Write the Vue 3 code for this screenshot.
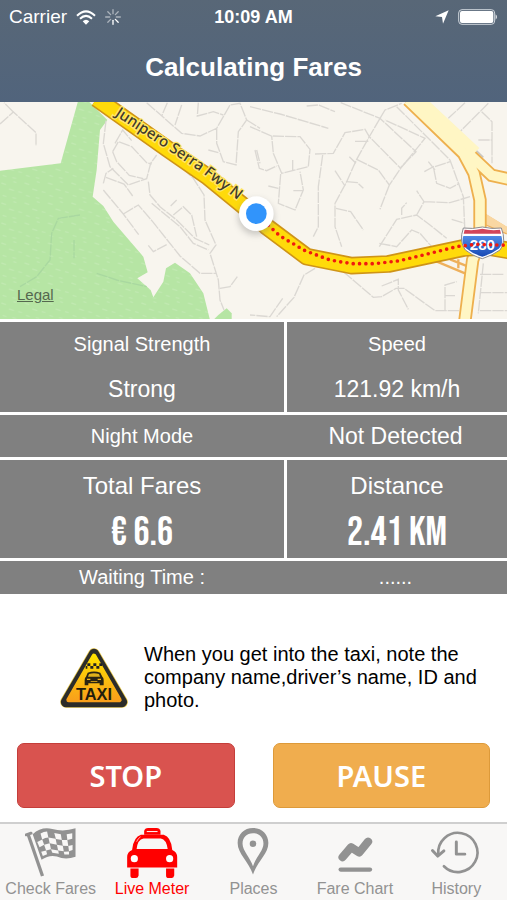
<script setup>
import { ref } from 'vue';

const activeTab = ref('meter');

const tabs = [
  { id: 'fares', label: 'Check Fares' },
  { id: 'meter', label: 'Live Meter' },
  { id: 'places', label: 'Places' },
  { id: 'chart', label: 'Fare Chart' },
  { id: 'history', label: 'History' },
];

const spokes = [0, 45, 90, 135, 180, 225, 270, 315];
</script>

<template>
  <div class="screen">
    <header class="header">
      <div class="status">
        <div class="status-side">
          <span>Carrier</span>
          <svg class="wifi" viewBox="0 0 60 45">
            <g fill="none" stroke="#fff" stroke-width="6">
              <path d="M3 17 Q30 -9 57 17" />
              <path d="M12 26 Q30 9 48 26" />
            </g>
            <path d="M20 34 Q30 25 40 34 L30 44 Z" fill="#fff" />
          </svg>
          <svg class="spinner" viewBox="-24 -24 48 48">
            <line
              v-for="(deg, i) in spokes"
              :key="deg"
              x1="0" y1="-10" x2="0" y2="-22"
              stroke="#fff" stroke-width="4" stroke-linecap="round"
              :opacity="i > 2 && i < 5 ? 1 : 0.5"
              :transform="`rotate(${deg})`"
            />
          </svg>
        </div>
        <span class="clock">10:09 AM</span>
        <div class="status-side right">
          <svg class="arrow" viewBox="0 0 42 42">
            <path d="M41 1 L24 41 L21 21 L1 19 Z" fill="#fff" />
          </svg>
          <svg class="battery" viewBox="0 0 120 48">
            <rect x="2" y="2" width="108" height="44" rx="10" fill="none" stroke="#cdd3da" stroke-width="3" />
            <rect x="6" y="6" width="100" height="36" rx="6" fill="#fff" />
            <path d="M113 16 Q120 24 113 32 Z" fill="#fff" />
          </svg>
        </div>
      </div>
      <h1 class="title">Calculating Fares</h1>
    </header>

    <div class="map">
      <svg class="map-canvas" viewBox="0 0 1521 651" preserveAspectRatio="xMidYMid slice">
        <defs>
          <pattern id="grass" width="70" height="60" patternUnits="userSpaceOnUse">
            <rect width="70" height="60" fill="#b6e5a4" />
            <path d="M4 9l14 5M40 5l9 3M27 27l15 5M55 35l11 3M8 46l11 4M37 53l11 2" stroke="#c0e9b0" stroke-width="4" />
          </pattern>
          <linearGradient id="shieldBlue" x1="0" y1="0" x2="0" y2="1">
            <stop offset="0" stop-color="#4f8be6" />
            <stop offset="1" stop-color="#1748b4" />
          </linearGradient>
          <filter id="soft" x="-50%" y="-50%" width="200%" height="200%">
            <feGaussianBlur stdDeviation="9" />
          </filter>
        </defs>
        <rect width="1521" height="651" fill="#f8f5ee" />

        <!-- west side -->
        <g transform="translate(0 -6)">
          <path
            d="M235 0 L182 190 L0 212 V660 H630 L610 580 L570 520 L525 488 L498 505 L490 545 L460 592 L452 570 L412 535 L443 517 L430 470 L340 365 L310 318 L278 290 L290 210 L300 90 L322 60 L262 0 Z"
            fill="url(#grass)"
          />
          <path d="M655 645 L680 625 L695 640 V660 H640 Z" fill="#b6e5a4" />
          <g class="lane">
            <path d="M0 72 L40 36 L108 98 V138 M40 36 L12 8" />
            <path d="M318 62 L310 130 L330 200 L385 255 L440 236 L452 190 L470 165" />
            <path d="M345 130 L368 90 L395 122 M338 155 L355 125 L395 140 L440 188 L455 192 M338 155 L350 185 L388 226 L430 236" />
            <path d="M310 250 L318 220 L340 205 M318 232 L372 252 L398 288" />
            <path d="M310 270 L370 342 L416 404 M370 342 L415 315 L458 365 L540 468 L600 520 L648 520" />
            <path d="M445 436 L460 455 L500 434" />
            <path d="M445 245 L450 285 L480 320 L530 360 L585 415 L628 435 M455 310 L540 380 L580 430 L625 450" />
            <path d="M512 318 L530 300 M520 345 L550 320 L575 345 L590 410" />
            <path d="M520 180 L580 235 L612 285 L615 360 L648 435 L630 460 L655 540 L660 600 L672 630" />
            <path d="M660 565 L690 560 L712 530" />
            <path d="M440 8 L545 100 L600 108 L650 85 L690 15 L720 10 L740 60 L715 95 L708 195 L670 185 L650 130 L650 85" />
            <path d="M502 8 L485 48 M545 15 L525 75 M595 8 L592 48 L640 35 L670 45 M740 60 L780 85 M625 150 L655 158 M770 150 L780 190" />
          </g>
          <path class="lane faint" d="M240 345 L175 355 L155 400 L150 480 L110 530 L60 560 M222 420 V475 M290 520 L350 540 L440 560" />
        </g>

        <!-- east side -->
        <g transform="translate(750 -6)">
          <g class="lane">
            <path d="M0 20 L90 42 L235 85 M170 18 L205 15 L255 35" />
            <path d="M0 80 L65 108 L150 110 L180 148 L175 200 L95 220 L70 160 L65 108 M15 150 L28 205 L50 212 L80 198 M128 180 V210" />
            <path d="M92 222 L85 310 L135 330 L160 270 L150 215 M130 272 H158 M55 258 L85 265" />
            <path d="M272 8 L390 55 L498 155 L450 205 M390 55 L405 30 L455 10" />
            <path d="M195 162 L250 160 L285 98 L345 88 L358 110 L320 178 L290 245 L255 310 V380 L275 440 M315 124 H355 M218 165 L205 260 V380 L190 410" />
            <path d="M390 55 L358 110 L452 205 L525 115 L405 60 M320 178 L385 210 L418 255 L452 205 M418 255 L390 328" />
            <path d="M255 212 L285 258 M298 170 L318 190 M290 245 L322 248 L340 265 M258 325 L302 335 L340 390" />
            <path d="M440 20 L525 105 L600 180 L640 290 L645 400 M555 200 L600 185 M523 215 L550 200 L560 250 L600 265 L628 250 M535 185 L555 210" />
            <path d="M388 440 L440 358 L500 345 L540 375 L590 415 M388 430 L440 440 L485 390 L510 400 L545 440 M455 345 V325 L470 308 M500 345 L522 305 L500 272 M522 305 L600 308 L660 290 M605 358 L645 370" />
            <path d="M280 515 L370 592 L395 590 L438 565 L462 565 L555 632 H640 M395 558 L445 538 V570 L475 628 M585 632 V555 L620 545 M585 587 H615" />
            <path d="M195 505 L162 525 L132 592 L80 650 M98 595 L60 650 L0 645 M700 490 L685 640 M690 523 H760 M690 578 H771 M690 632 H771" />
            <path d="M715 10 L630 95 M645 8 L595 55 M685 120 H726 V160 M695 35 L726 65 V190" />
          </g>
          <path d="M520 0 L700 172" stroke="#c9c7c2" stroke-width="5" fill="none" />

          <!-- ramps and boulevard -->
          <g class="ramp-edge">
            <path d="M545 478 L645 520 M600 478 L655 500 M625 478 V505 M705 345 L771 385 M705 372 L771 400" />
          </g>
          <path d="M705 340 L771 380 V400 L705 372 Z" fill="#f9d7a2" />
          <path class="side-edge" d="M474 0 L640 160 L672 220 L690 300 V420 L668 480 L645 660 M655 160 L725 226 L780 238" />
          <path d="M497 -8 L675 158" stroke="#fff6c4" stroke-width="38" fill="none" />
          <path class="side-fill" d="M474 0 L640 160 L672 220 L690 300 V420 L668 480 L645 660 M655 160 L725 226 L780 238" />
        </g>

        <!-- freeway -->
        <path class="fwy-edge" d="M290 -10 L500 139 L620 222 L765 340 L800 374 L920 464 L1055 491 L1165 486 L1390 438 L1460 434 L1530 446" />
        <path class="fwy-fill" d="M290 -10 L500 139 L620 222 L765 340 L800 374 L920 464 L1055 491 L1165 486 L1390 438 L1460 434 L1530 446" />
        <path id="fwyName" d="M344 40 L500 142 L610 215 L760 331" fill="none" />
        <text class="fwy-name"><textPath href="#fwyName">Junipero Serra Fwy N</textPath></text>

        <!-- route shield -->
        <g transform="translate(0 -6)">
          <path d="M1390 384 Q1418 388 1447 381 Q1476 388 1504 384 Q1520 425 1500 450 Q1478 466 1447 476 Q1414 466 1396 450 Q1376 425 1390 384 Z" fill="#fff" stroke="#8b8a8e" stroke-width="3" />
          <path d="M1394 389 Q1420 393 1447 386 Q1474 393 1500 389 L1503 401 H1391 Z" fill="#d3455a" />
          <path d="M1390 408 H1504 Q1512 430 1496 446 Q1476 461 1447 470 Q1418 461 1400 446 Q1382 430 1390 408 Z" fill="url(#shieldBlue)" />
          <text class="shield-no" x="1447" y="450" text-anchor="middle">280</text>
        </g>
        <path class="route" d="M805 370 L840 402 L915 446 L990 474 L1055 485 H1125 L1200 476 L1375 433 L1430 427 L1521 430" />

        <!-- current position -->
        <circle cx="768" cy="345" r="54" fill="#777" opacity="0.35" filter="url(#soft)" />
        <circle cx="769" cy="335" r="52" fill="#fff" />
        <circle cx="769" cy="335" r="31" fill="#3194fb" />
      </svg>
      <a class="legal" href="#legal">Legal</a>
    </div>

    <section class="readings">
      <div class="row split">
        <div class="cell tall">
          <span class="label">Signal Strength</span>
          <span class="value">Strong</span>
        </div>
        <div class="cell tall">
          <span class="label">Speed</span>
          <span class="value">121.92 km/h</span>
        </div>
      </div>
      <div class="row">
        <div class="cell night"><span class="label">Night Mode</span></div>
        <div class="cell night"><span class="value">Not Detected</span></div>
      </div>
      <div class="row split">
        <div class="cell totals">
          <span class="heading">Total Fares</span>
          <span class="big">€ 6.6</span>
        </div>
        <div class="cell totals">
          <span class="heading">Distance</span>
          <span class="big">2.41 KM</span>
        </div>
      </div>
      <div class="row">
        <div class="cell waiting"><span class="label">Waiting Time :</span></div>
        <div class="cell waiting"><span class="label">......</span></div>
      </div>
    </section>

    <section class="tip">
      <svg class="sign" viewBox="0 0 204 180">
        <defs>
          <linearGradient id="signFill" x1="0" y1="0" x2="0" y2="1">
            <stop offset="0" stop-color="#ffe000" />
            <stop offset="1" stop-color="#f9a01b" />
          </linearGradient>
        </defs>
        <path d="M102 18 L186 162 H18 Z" fill="#2c2c2a" stroke="#e9c94a" stroke-width="35" stroke-linejoin="round" />
        <path d="M102 18 L186 162 H18 Z" fill="#2c2c2a" stroke="#2c2c2a" stroke-width="31" stroke-linejoin="round" />
        <path d="M102 24 L178 156 H26 Z" fill="url(#signFill)" stroke="url(#signFill)" stroke-width="14" stroke-linejoin="round" />
        <path d="M82 46h9v8h-9zM100 46h9v8h-9zM118 46h8v8h-8zM91 54h9v8h-9zM109 54h9v8h-9zM77 54h5v8h-5z" fill="#222" />
        <path d="M83 74 Q102 67 121 74 L127 86 Q131 88 131 96 V112 H119 V106 H85 V112 H74 V96 Q74 88 78 86 Z" fill="#2a2413" />
        <path d="M87 78 Q102 73 117 78 L120 86 H84 Z" fill="#dfb11c" />
        <path d="M81 92h10v4H81zM113 92h10v4h-10zM92 99h20v2H92z" fill="#f3b51c" />
        <text class="sign-text" x="102" y="157" text-anchor="middle">TAXI</text>
      </svg>
      <p>When you get into the taxi, note the company name,driver’s name, ID and photo.</p>
    </section>

    <div class="actions">
      <button type="button" class="btn stop">STOP</button>
      <button type="button" class="btn pause">PAUSE</button>
    </div>

    <nav class="tabbar">
      <button
        v-for="tab in tabs"
        :key="tab.id"
        type="button"
        class="tab"
        :class="{ active: tab.id === activeTab }"
        @click="activeTab = tab.id"
      >
        <svg v-if="tab.id === 'fares'" class="icon" viewBox="0 0 156 156">
          <path d="M8 22 L52 150" stroke="currentColor" stroke-width="10" />
          <path d="M2 24 L17 19" stroke="currentColor" stroke-width="9" stroke-linecap="round" />
          <path d="M22 22 Q48 -2 82 6 Q116 16 153 4 V91 Q122 102 96 90 Q72 84 49 100 Z" fill="currentColor" />
          <g fill="#f8f7f6">
            <path d="M46 20 Q56 14 66 14 L70 32 Q60 32 51 38 Z" />
            <path d="M88 18 L108 22 L111 40 L93 37 Z" />
            <path d="M126 22 L143 19 V36 L128 40 Z" />
            <path d="M70 32 L92 36 L96 54 L74 50 Z" />
            <path d="M111 40 L128 40 L131 58 L114 57 Z" />
            <path d="M36 46 L51 38 L57 54 L43 62 Z" />
            <path d="M57 54 L74 50 L78 68 L63 72 Z" />
            <path d="M96 54 L114 57 L117 74 L100 72 Z" />
            <path d="M131 58 L144 55 V70 L133 74 Z" />
            <path d="M78 68 L100 72 L102 82 L82 79 Z" />
            <path d="M48 76 L63 72 L66 83 L53 89 Z" />
            <path d="M117 76 L133 75 V84 L119 84 Z" />
          </g>
        </svg>
        <svg v-else-if="tab.id === 'meter'" class="icon" viewBox="0 0 156 156">
          <path d="M54 24 V12 Q56 3 66 3 H92 Q102 3 104 12 V24 Z" fill="currentColor" />
          <path d="M62 14h33" stroke="#fff" stroke-width="3" />
          <path
            fill="currentColor" fill-rule="evenodd"
            d="M44 24 H114 Q136 30 140 70 Q155 76 155 92 V124 H2 V92 Q2 76 17 70 Q22 30 44 24 Z M52 35 Q34 38 31 67 H126 Q122 38 105 35 Z"
          />
          <path d="M12 127h25v21q-2 8-8 8h-9q-8 0-8-8zM121 127h25v21q-2 8-8 8h-9q-8 0-8-8z" fill="currentColor" />
          <path d="M43 30 Q34 36 31 45" stroke="#fff" stroke-width="2" fill="none" />
          <circle cx="24" cy="97" r="11" fill="#fff" />
          <circle cx="132" cy="97" r="11" fill="#fff" />
        </svg>
        <svg v-else-if="tab.id === 'places'" class="icon" viewBox="0 0 156 156">
          <path
            fill="currentColor" fill-rule="evenodd"
            d="M78 3 C105 3 125 22 125 49 C125 82 92 105 78 145 C64 105 31 82 31 49 C31 22 51 3 78 3 Z M78 19 C58 19 46 32 46 51 C46 72 69 92 78 120 C87 92 110 72 110 51 C110 32 98 19 78 19 Z"
          />
          <circle cx="78" cy="51" r="10" fill="currentColor" />
        </svg>
        <svg v-else-if="tab.id === 'chart'" class="icon" viewBox="0 0 156 156">
          <path d="M40 92 L66 62 L91 78 L118 45" fill="none" stroke="currentColor" stroke-width="25" stroke-linecap="round" stroke-linejoin="round" />
          <path d="M34 130 H124" stroke="currentColor" stroke-width="13" stroke-linecap="round" />
        </svg>
        <svg v-else class="icon" viewBox="0 0 156 156">
          <g fill="none" stroke="currentColor" stroke-linecap="round" stroke-linejoin="round">
            <path d="M24 84 A60 60 0 1 1 41 120" stroke-width="8" />
            <path d="M6 72 L22 89 L41 73" stroke-width="9" />
            <path d="M79 46 V83 H105" stroke-width="9" />
          </g>
        </svg>
        <span>{{ tab.label }}</span>
      </button>
    </nav>
  </div>
</template>

<style>
body {
  margin: 0;
  background: #fff;
}
</style>

<style scoped>
.screen {
  display: flex;
  flex-direction: column;
  min-height: 100vh;
  font-family: 'Liberation Sans', Arial, sans-serif;
  color: #000;
}
.header {
  height: 102px;
  background: linear-gradient(#586777, #51647c);
  color: #fff;
}
.status {
  display: flex;
  align-items: center;
  height: 34px;
  padding: 0 9px;
  font-size: 19px;
}
.status-side {
  flex: 1;
  display: flex;
  align-items: center;
  gap: 9px;
}
.status-side.right {
  justify-content: flex-end;
}
.clock {
  font-size: 18px;
  font-weight: bold;
}
.wifi {
  width: 20px;
  height: 15px;
}
.spinner {
  width: 16px;
  height: 16px;
}
.arrow {
  width: 14px;
  height: 14px;
}
.battery {
  width: 40px;
  height: 16px;
}
.title {
  margin: 0;
  padding-top: 18px;
  font-size: 26px;
  line-height: 30px;
  font-weight: bold;
  text-align: center;
}

.map {
  position: relative;
  height: 217px;
}
.map-canvas {
  display: block;
  width: 100%;
  height: 100%;
}
.lane {
  fill: none;
  stroke: #dbd8d3;
  stroke-width: 4;
  stroke-dasharray: 34 3;
}
.lane.faint {
  stroke: #a9d8a0;
}
.ramp-edge {
  fill: none;
  stroke: #eeb05c;
  stroke-width: 7;
}
.side-edge {
  fill: none;
  stroke: #eeb04e;
  stroke-width: 40;
}
.side-fill {
  fill: none;
  stroke: #fff6c4;
  stroke-width: 29;
}
.fwy-edge {
  fill: none;
  stroke: #cf9418;
  stroke-width: 53;
  stroke-linejoin: round;
}
.fwy-fill {
  fill: none;
  stroke: #ffda0a;
  stroke-width: 43;
  stroke-linejoin: round;
}
.fwy-name {
  font-family: 'Noto Sans', sans-serif;
  font-size: 45px;
  font-weight: 500;
  fill: #3f3a2a;
  stroke: #ffe668;
  stroke-width: 8;
  paint-order: stroke;
}
.shield-no {
  font-size: 45px;
  font-weight: bold;
  fill: #fff;
}
.route {
  fill: none;
  stroke: #f0190f;
  stroke-width: 11;
  stroke-linecap: round;
  stroke-dasharray: 0 19;
}
.legal {
  position: absolute;
  left: 17px;
  bottom: 15px;
  font-size: 15px;
  line-height: 18px;
  color: #55684f;
}

.readings {
  display: flex;
  flex-direction: column;
  gap: 3px;
  padding-top: 3px;
  color: #fff;
}
.row {
  display: grid;
  grid-template-columns: 284fr 223fr;
  background: #808080;
}
.row.split {
  grid-template-columns: 284fr 220fr;
  gap: 3px;
  background: #fff;
}
.cell {
  display: flex;
  flex-direction: column;
  align-items: center;
  background: #808080;
  line-height: 34px;
}
.cell.tall {
  gap: 11px;
  padding: 5px 0 6px;
}
.cell.night {
  line-height: 42px;
}
.cell.totals {
  gap: 13px;
  padding: 9px 0 8px;
}
.cell.waiting {
  line-height: 33px;
}
.label {
  font-size: 20px;
}
.value {
  font-size: 23px;
}
.heading {
  font-size: 24px;
}
.big {
  font-family: 'Bebas Neue', 'Roboto Condensed', 'Noto Sans CJK SC', sans-serif;
  font-size: 40px;
}

.tip {
  flex: 1;
  display: flex;
  align-items: center;
  gap: 16px;
  padding: 18px 24px 0 60px;
}
.tip p {
  margin: 0;
  font-size: 20px;
  line-height: 23px;
}
.sign {
  flex: none;
  width: 68px;
  height: 60px;
}
.sign-text {
  font-size: 49px;
  font-weight: bold;
  fill: #221c0c;
}

.actions {
  display: grid;
  grid-template-columns: 1fr 1fr;
  gap: 38px;
  padding: 0 17px 14px;
}
.btn {
  height: 65px;
  border: 1px solid;
  border-radius: 7px;
  font-family: 'Noto Sans', sans-serif;
  font-size: 29px;
  font-weight: 600;
  color: #fff;
  cursor: pointer;
}
.btn.stop {
  background: #d9534f;
  border-color: #c43e3a;
}
.btn.pause {
  background: #f0ad4e;
  border-color: #dd9a3a;
}

.tabbar {
  display: grid;
  grid-template-columns: repeat(5, 1fr);
  border-top: 2px solid #cfcfcf;
  background: #f8f7f6;
}
.tab {
  display: flex;
  flex-direction: column;
  align-items: center;
  height: 76px;
  padding: 3px 0 0;
  border: 0;
  background: none;
  color: #929292;
  font-family: inherit;
  font-size: 16px;
  line-height: 22px;
  white-space: nowrap;
  cursor: pointer;
}
.tab.active {
  color: #f00;
}
.icon {
  width: 52px;
  height: 52px;
}
</style>
